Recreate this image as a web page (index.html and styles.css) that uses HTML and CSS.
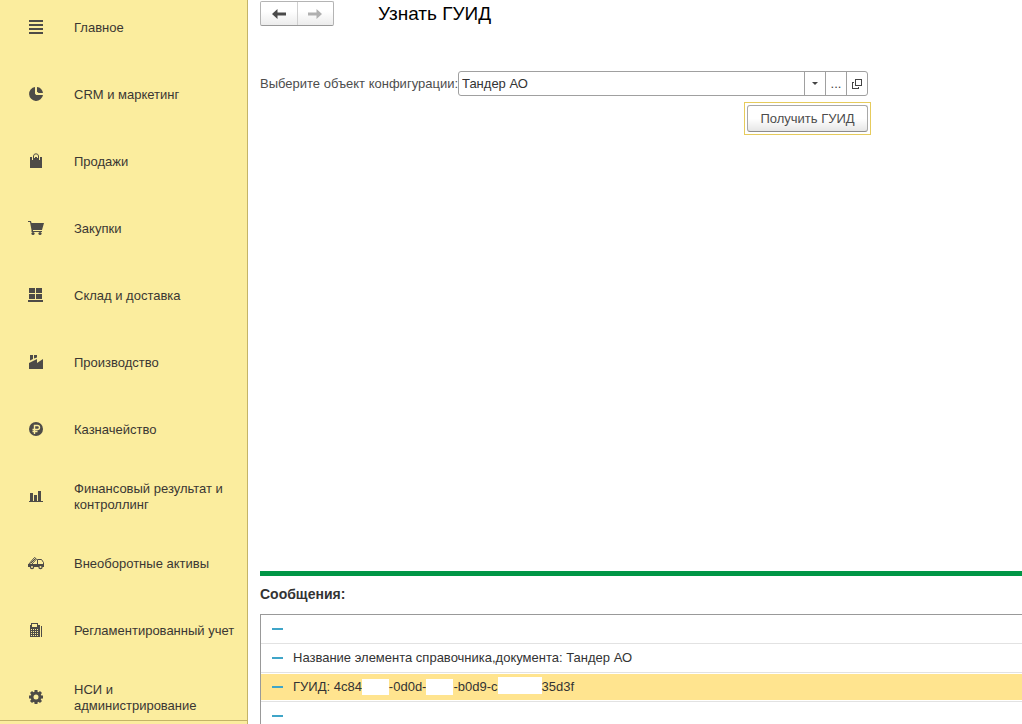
FILE: index.html
```html
<!DOCTYPE html>
<html lang="ru">
<head>
<meta charset="utf-8">
<meta name="viewport" content="width=device-width, initial-scale=1">
<title>Узнать ГУИД</title>
<link rel="stylesheet" href="styles.css">
</head>
<body>
<div class="app">
  <nav class="sidebar" aria-label="Разделы">
    <ul class="sections">
      <li><a class="section" href="#"><svg class="icon" viewBox="0 0 16 16" shape-rendering="crispEdges"><path d="M1 1h14v2H1zM1 5h14v2H1zM1 9h14v2H1zM1 13h14v2H1z"/></svg><span class="section-name">Главное</span></a></li>
      <li><a class="section" href="#"><svg class="icon" viewBox="0 0 16 16"><path d="M7 1A7 7 0 1 0 15 9H8.200L7 7.800z"/><path d="M9 1a6.500 6.500 0 0 1 6 6H10.500L9 5.500z"/></svg><span class="section-name">CRM и маркетинг</span></a></li>
      <li><a class="section" href="#"><svg class="icon" viewBox="0 0 16 16"><path d="M2 4h12v11H2z"/><path class="cut" d="M4.500 7V4M11.500 7V4M6.500 5V3.500h3V5"/><path class="stroke" d="M5.500 7V3A2.500 2.500 0 0 1 8 .8 2.500 2.500 0 0 1 10.500 3V7"/></svg><span class="section-name">Продажи</span></a></li>
      <li><a class="section" href="#"><svg class="icon" viewBox="0 0 16 16"><path d="M0 1h3l.5 2H16l-2 7H5v1h9v1H3.500V10L2 2H0z"/><circle cx="5" cy="13.500" r="1.600"/><circle cx="12" cy="13.500" r="1.600"/></svg><span class="section-name">Закупки</span></a></li>
      <li><a class="section" href="#"><svg class="icon" viewBox="0 0 16 16" shape-rendering="crispEdges"><path d="M1 1h6v5H1zM8 1h6v5H8zM1 7h6v5H1zM8 7h6v5H8zM0 13h15v2H0z"/></svg><span class="section-name">Склад и доставка</span></a></li>
      <li><a class="section" href="#"><svg class="icon" viewBox="0 0 16 16"><path d="M2 1h3v4L2 6.500zM6 1h3v2.500L6 4.500z"/><path d="M1 9 9 5v4L15 5v10H1z"/></svg><span class="section-name">Производство</span></a></li>
      <li><a class="section" href="#"><svg class="icon" viewBox="0 0 16 16"><circle cx="8" cy="8" r="7"/><path class="ruble" d="M6.500 13V4.500h3a2 2 0 0 1 0 4H4.500M4.500 10.500h5"/></svg><span class="section-name">Казначейство</span></a></li>
      <li><a class="section" href="#"><svg class="icon" viewBox="0 0 16 16" shape-rendering="crispEdges"><path d="M2 5h3v8h1V7h3v6h1V3h3v10h2v1H1v-1h1z"/></svg><span class="section-name">Финансовый результат и контроллинг</span></a></li>
      <li><a class="section" href="#"><svg class="icon" viewBox="0 0 16 16"><path class="stroke" d="M.5 12V9.500L6.500 2.500l2 1.500-5 5.500M2.500 8.500l5-5M9.500 11V4.500h4l2 3V12M.5 11.500H15"/><path d="M0 9h9V6l1 3h6v3H0z"/><circle cx="4" cy="12" r="2.200"/><circle cx="12.500" cy="12" r="2.200"/><circle class="hole" cx="4" cy="12" r="1"/><circle class="hole" cx="12.500" cy="12" r="1"/></svg><span class="section-name">Внеоборотные активы</span></a></li>
      <li><a class="section" href="#"><svg class="icon" viewBox="0 0 16 16" shape-rendering="crispEdges"><path d="M3 1h7v2h2v12H2V3h1zM13 4h1v11h-1z"/><path class="hole" d="M4 2h5v3H4zM3 7h1v1H3zM5 7h1v1H5zM7 7h1v1H7zM9 7h1v1H9zM3 9h1v1H3zM5 9h1v1H5zM7 9h1v1H7zM9 9h1v1H9zM3 11h1v1H3zM5 11h1v1H5zM7 11h1v1H7zM9 11h1v1H9zM3 13h1v1H3zM5 13h1v1H5zM7 13h1v1H7zM9 13h1v1H9z"/></svg><span class="section-name">Регламентированный учет</span></a></li>
      <li><a class="section" href="#"><svg class="icon" viewBox="0 0 16 16"><circle class="gear" cx="8" cy="8" r="4"/><path class="gear" d="M8 1v2.500M8 12.500V15M1 8h2.500M12.500 8H15M3 3l1.800 1.800M11.200 11.200 13 13M3 13l1.800-1.800M11.200 4.800 13 3"/></svg><span class="section-name">НСИ и администрирование</span></a></li>
    </ul>
  </nav>

  <main class="main">
    <header class="topbar">
      <div class="history">
        <button class="history-btn" type="button" aria-label="Назад"><svg class="arrow" viewBox="0 0 14 10"><path d="M0 5 5.500 0v3.500H14v3H5.500V10z"/></svg></button>
        <button class="history-btn" type="button" aria-label="Вперед" disabled><svg class="arrow" viewBox="0 0 14 10"><path d="M14 5 8.500 0v3.500H0v3h8.500V10z"/></svg></button>
      </div>
      <h1 class="title">Узнать ГУИД</h1>
    </header>

    <form class="form">
      <div class="field-row">
        <label class="label" for="object">Выберите объект конфигурации:</label>
        <div class="picker">
          <input class="picker-input" id="object" type="text" value="Тандер АО">
          <button class="picker-btn" type="button" aria-label="Список"><svg class="caret" viewBox="0 0 6 3"><path d="M0 0h6L3 3z"/></svg></button>
          <button class="picker-btn" type="button" aria-label="Выбрать">...</button>
          <button class="picker-btn" type="button" aria-label="Открыть"><svg class="open" viewBox="0 0 10 10" shape-rendering="crispEdges"><path d="M3.500.5h6v6h-6zM2 3.500H.5v6h6V8"/></svg></button>
        </div>
      </div>
      <div class="submit-ring"><button class="submit" type="button">Получить ГУИД</button></div>
    </form>

    <section class="messages" aria-labelledby="messages-title">
      <h2 class="messages-title" id="messages-title">Сообщения:</h2>
      <ul class="message-list">
        <li class="message"></li>
        <li class="message">Название элемента справочника,документа: Тандер АО</li>
        <li class="message selected">ГУИД: 4c84<span class="mask"></span>-0d0d-<span class="mask"></span>-b0d9-c<span class="mask wide"></span>35d3f</li>
        <li class="message"></li>
      </ul>
    </section>
  </main>
</div>
</body>
</html>
```
FILE: styles.css
```css
* {
  box-sizing: border-box;
}

body {
  margin: 0;
  background: #fff;
  color: #333;
  font: 13px/16px "Liberation Sans", Arial, sans-serif;
}

button,
input {
  font: inherit;
  color: inherit;
}

ul {
  list-style: none;
  margin: 0;
  padding: 0;
}

.app {
  display: flex;
  height: 100vh;
}

/* Sidebar */
.sidebar {
  flex: 0 0 248px;
  overflow: hidden;
  background: #fbed9e;
  border-right: 1px solid #c4b468;
}

.sections {
  display: grid;
  gap: 21px;
  padding-top: 4px;
  border-bottom: 1px solid #c4b468;
}

.section {
  display: flex;
  align-items: center;
  gap: 30px;
  height: 46px;
  padding: 0 12px 0 28px;
  color: #3a3733;
  text-decoration: none;
}

.section-name {
  padding-top: 2px;
}

.icon {
  flex: none;
  width: 16px;
  height: 16px;
  fill: #4d4b47;
}

.icon .stroke {
  fill: none;
  stroke: #4d4b47;
}

.icon .cut {
  fill: none;
  stroke: #fbed9e;
}

.icon .ruble {
  fill: none;
  stroke: #fbed9e;
  stroke-width: 1.4;
}

.icon .hole {
  fill: #fbed9e;
}

.icon .gear {
  fill: none;
  stroke: #4d4b47;
  stroke-width: 3;
}

/* Work area */
.main {
  flex: 1;
  min-width: 0;
  display: flex;
  flex-direction: column;
  padding-left: 12px;
}

.topbar {
  display: flex;
  align-items: center;
  gap: 44px;
  height: 27px;
}

.history {
  display: flex;
  width: 74px;
  height: 25px;
  border: 1px solid #b4b4b4;
  border-bottom-color: #999;
  border-radius: 2px;
  background: linear-gradient(#fff 40%, #ececec);
}

.history-btn {
  flex: 1;
  display: grid;
  place-items: center;
  padding: 0;
  border: 0;
  background: none;
}

.history-btn + .history-btn {
  border-left: 1px solid #d0d0d0;
}

.arrow {
  width: 14px;
  height: 10px;
  fill: #4a4a4a;
}

.history-btn:disabled .arrow {
  fill: #b0b0b0;
}

.title {
  margin: 0;
  color: #000;
  font-size: 19px;
  font-weight: 400;
  line-height: 24px;
}

.form {
  flex: 1;
  display: flex;
  flex-direction: column;
  align-items: flex-end;
  gap: 6px;
  width: 100%;
  max-width: 611px;
  padding-top: 44px;
}

.field-row {
  display: flex;
  align-items: center;
  width: 100%;
  padding-right: 3px;
}

.label {
  flex: 0 0 198px;
  color: #4d4d4d;
  white-space: nowrap;
}

.picker {
  flex: 1;
  display: flex;
  min-width: 0;
  height: 25px;
  border: 1px solid #a0a0a0;
  border-radius: 3px;
}

.picker-input {
  flex: 1;
  min-width: 0;
  padding: 0 3px;
  border: 0;
  background: none;
  outline: 0;
}

.picker-btn {
  display: grid;
  place-items: center;
  width: 21px;
  padding: 0;
  border: 0;
  border-left: 1px solid #a0a0a0;
  background: none;
  color: #444;
}

.caret {
  width: 6px;
  height: 3px;
  fill: #444;
}

.open {
  width: 10px;
  height: 10px;
  fill: none;
  stroke: #444;
}

.submit-ring {
  padding: 2px;
  border: 1px solid #e6cb5c;
}

.submit {
  display: block;
  width: 121px;
  height: 27px;
  padding: 1px 0 0;
  border: 1px solid #a8a8a8;
  border-bottom-color: #8c8c8c;
  border-radius: 3px;
  background: linear-gradient(#fff 50%, #e6e6e6);
  color: #4d4d4d;
}

/* Messages */
.messages {
  flex: 0 0 153px;
  display: flex;
  flex-direction: column;
  min-height: 0;
  border-top: 5px solid #009646;
}

.messages-title {
  margin: 0;
  padding: 10px 0 12px;
  font-size: 14px;
  line-height: 16px;
}

.message-list {
  flex: 1;
  min-height: 0;
  overflow: hidden;
  border-top: 1px solid #999;
  border-left: 1px solid #999;
}

.message {
  display: flex;
  align-items: center;
  height: 29px;
  padding-left: 11px;
  border-bottom: 1px solid #e2e2e2;
  white-space: pre;
}

.message::before {
  content: "";
  width: 11px;
  height: 2px;
  margin-right: 10px;
  background: #3fa5c8;
}

.message.selected {
  background: #ffe48f;
  box-shadow: inset 0 1px #fff, inset 0 -1px #fff;
}

.mask {
  width: 27px;
  height: 16px;
  background: #fff;
}

.mask.wide {
  width: 44px;
  height: 17px;
  margin-bottom: 4px;
}
```
